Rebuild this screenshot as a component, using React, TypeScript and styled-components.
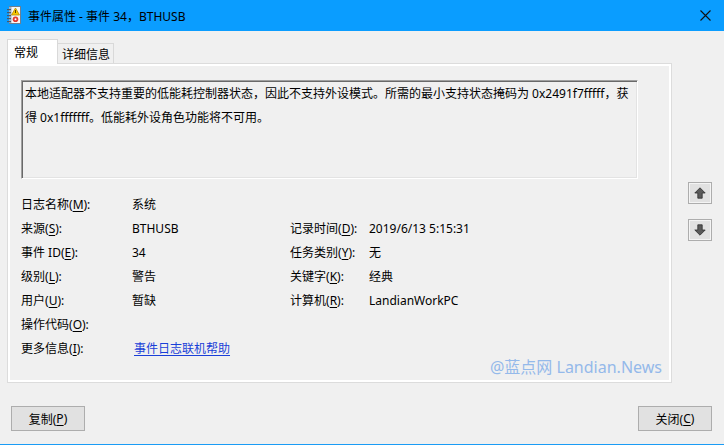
import styled, { createGlobalStyle } from "styled-components"

const GlobalStyle = createGlobalStyle`
  html, body {
    margin: 0;
    padding: 0;
    background: #f0f0f0;
  }
  body {
    font-family: "Noto Sans", "Noto Sans CJK SC", sans-serif;
    font-size: 12px;
    color: #000;
  }
`

const Window = styled.div`
  width: 724px;
  height: 445px;
  box-sizing: border-box;
  display: flex;
  flex-direction: column;
  background: #f0f0f0;
  border-bottom: 1px solid #1a9cf5;
  overflow: hidden;
`

const TitleBar = styled.div`
  height: 31px;
  flex: none;
  display: flex;
  align-items: center;
  background: #0a9dff;
  padding-left: 6px;
  gap: 6px;
`

const TitleText = styled.span`
  flex: 1;
  font-size: 12px;
  color: #000;
  padding-top: 1px;
`

const CloseBtn = styled.div`
  width: 46px;
  height: 31px;
  display: flex;
  align-items: center;
  justify-content: center;
  padding-left: 8px;
  box-sizing: border-box;
`

const Body = styled.div`
  display: flex;
  padding: 8px 0 0 7px;
`

const Main = styled.div`
  display: flex;
  flex-direction: column;
  width: 665px;
`

const Tabs = styled.div`
  display: flex;
  align-items: flex-end;
  height: 24px;
`

const Tab = styled.div<{ $active?: boolean }>`
  box-sizing: border-box;
  display: flex;
  align-items: center;
  border: 1px solid #d9d9d9;
  border-bottom: none;
  position: relative;
  ${(p) =>
    p.$active
      ? `
    width: 51px;
    height: 25px;
    margin-bottom: -1px;
    background: #fff;
    padding-left: 6px;
    z-index: 1;
  `
      : `
    width: 56px;
    height: 20px;
    border-left: none;
    background: #f0f0f0;
    padding-left: 4px;
    padding-top: 1px;
  `}
`

const Panel = styled.div`
  position: relative;
  box-sizing: border-box;
  height: 320px;
  border: 1px solid #dcdcdc;
  box-shadow: inset 0 0 0 2px #ffffff;
  background: #f0f0f0;
  padding: 16px 0 0 13px;
`

const MessageBox = styled.div`
  box-sizing: border-box;
  width: 617px;
  height: 99px;
  border: 1px solid;
  border-color: #a0a0a0 #fff #fff #a0a0a0;
  box-shadow: inset 1px 1px 0 #696969, inset -1px -1px 0 #e3e3e3;
  padding: 1px 3px;
  line-height: 24px;
  white-space: nowrap;
  color: #000;
`

const Fields = styled.div`
  display: grid;
  grid-template-columns: 111px 158px 79px auto;
  grid-auto-rows: 24px;
  align-items: center;
  margin-top: 13px;
  color: #000;
`

const Key = styled.u`
  text-decoration: underline;
  text-underline-offset: 2px;
`

const Link = styled.a`
  color: #1a3fd8;
  text-decoration: underline;
  text-underline-offset: 2px;
  padding-left: 2px;
  cursor: pointer;
`

const Watermark = styled.div`
  position: absolute;
  right: 9px;
  bottom: 5px;
  font-size: 16px;
  line-height: 20px;
  color: #94b9ea;
  font-family: "Noto Sans", "Noto Sans CJK SC", sans-serif;
`

const Side = styled.div`
  display: flex;
  flex-direction: column;
  gap: 15px;
  padding: 143px 0 0 16px;
`

const ArrowBtn = styled.div`
  box-sizing: border-box;
  width: 24px;
  height: 22px;
  border: 1px solid #adadad;
  background: #e1e1e1;
  box-shadow: inset 0 0 0 1px #f4f4f4;
  display: flex;
  align-items: center;
  justify-content: center;
`

const Footer = styled.div`
  display: flex;
  justify-content: space-between;
  padding: 23px 12px 0 11px;
`

const Button = styled.div`
  box-sizing: border-box;
  width: 74px;
  height: 25px;
  border: 1px solid #adadad;
  background: #e1e1e1;
  display: flex;
  align-items: center;
  justify-content: center;
`

const Label = ({ text, k }: { text: string; k: string }) => (
  <span>
    {text}(<Key>{k}</Key>):
  </span>
)

const EventIcon = () => (
  <svg width="16" height="19" viewBox="0 0 16 19">
    <rect x="3.5" y="0.5" width="11" height="17" fill="#f6f6f6" stroke="#6f7f90" />
    <rect x="3" y="1" width="2.5" height="16" fill="#9fb2c6" />
    {[3, 6, 9, 12, 15].map((y) => (
      <rect key={y} x="1" y={y} width="4" height="1.2" fill="#4a5868" />
    ))}
    <polygon points="9.5,2 13.5,9 5.5,9" fill="#f8c800" stroke="#b88a00" strokeWidth="0.8" />
    <rect x="9" y="4" width="1" height="3" fill="#5a4000" />
    <circle cx="9.5" cy="13.2" r="2.8" fill="#e23a30" />
    <circle cx="9.5" cy="13.2" r="1" fill="#fff" />
  </svg>
)

const CloseIcon = () => (
  <svg width="11" height="11" viewBox="0 0 11 11">
    <path d="M0.5 0.5 L10.5 10.5 M10.5 0.5 L0.5 10.5" stroke="#111" strokeWidth="1.1" />
  </svg>
)

const Arrow = ({ down }: { down?: boolean }) => (
  <svg
    width="12"
    height="12"
    viewBox="0 0 12 12"
    style={down ? { transform: "rotate(180deg)" } : undefined}
  >
    <polygon
      points="6,0.8 11.2,6 8.2,6 8.2,11.2 3.8,11.2 3.8,6 0.8,6"
      fill="#5a5a5a"
      stroke="#2e2e2e"
      strokeWidth="0.8"
    />
  </svg>
)

export default function App() {
  return (
    <>
      <GlobalStyle />
      <Window>
        <TitleBar>
          <EventIcon />
          <TitleText>事件属性 - 事件 34，BTHUSB</TitleText>
          <CloseBtn>
            <CloseIcon />
          </CloseBtn>
        </TitleBar>
        <Body>
          <Main>
            <Tabs>
              <Tab $active>常规</Tab>
              <Tab>详细信息</Tab>
            </Tabs>
            <Panel>
              <MessageBox>
                本地适配器不支持重要的低能耗控制器状态，因此不支持外设模式。所需的最小支持状态掩码为 0x2491f7fffff，获
                <br />
                得 0x1fffffff。低能耗外设角色功能将不可用。
              </MessageBox>
              <Fields>
                <Label text="日志名称" k="M" />
                <span>系统</span>
                <span />
                <span />

                <Label text="来源" k="S" />
                <span>BTHUSB</span>
                <Label text="记录时间" k="D" />
                <span>2019/6/13 5:15:31</span>

                <Label text="事件 ID" k="E" />
                <span>34</span>
                <Label text="任务类别" k="Y" />
                <span>无</span>

                <Label text="级别" k="L" />
                <span>警告</span>
                <Label text="关键字" k="K" />
                <span>经典</span>

                <Label text="用户" k="U" />
                <span>暂缺</span>
                <Label text="计算机" k="R" />
                <span>LandianWorkPC</span>

                <Label text="操作代码" k="O" />
                <span />
                <span />
                <span />

                <Label text="更多信息" k="I" />
                <span>
                  <Link>事件日志联机帮助</Link>
                </span>
                <span />
                <span />
              </Fields>
              <Watermark>@蓝点网 Landian.News</Watermark>
            </Panel>
          </Main>
          <Side>
            <ArrowBtn>
              <Arrow />
            </ArrowBtn>
            <ArrowBtn>
              <Arrow down />
            </ArrowBtn>
          </Side>
        </Body>
        <Footer>
          <Button>
            复制(<Key>P</Key>)
          </Button>
          <Button>
            关闭(<Key>C</Key>)
          </Button>
        </Footer>
      </Window>
    </>
  )
}
